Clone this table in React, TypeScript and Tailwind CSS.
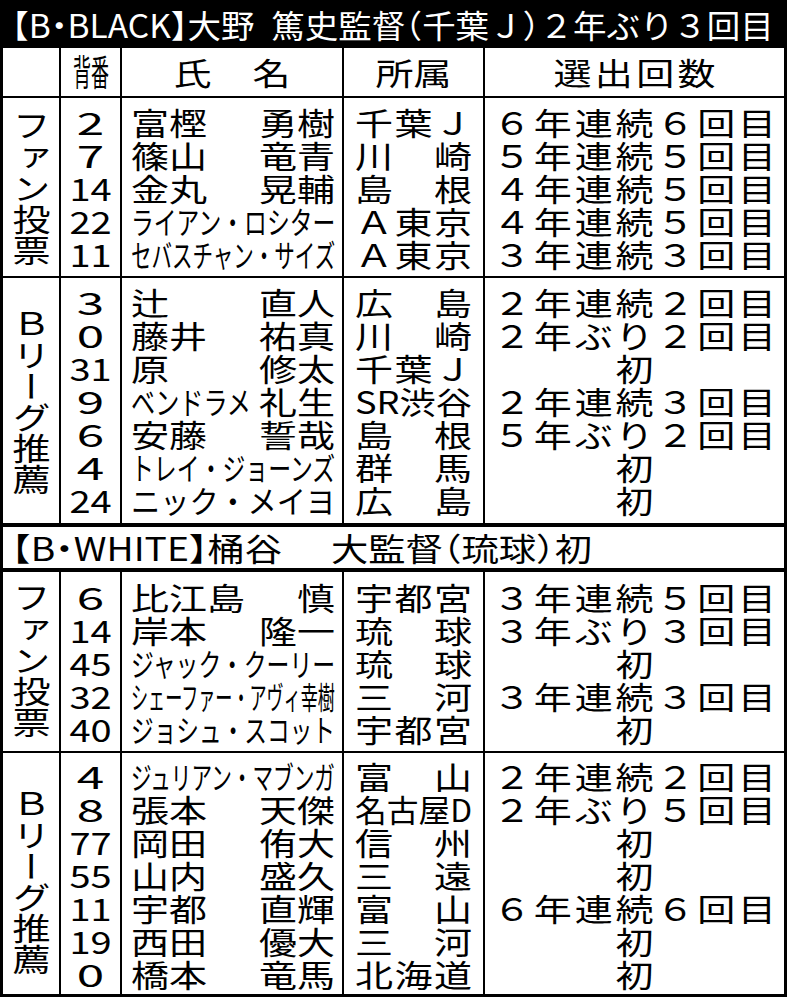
import React, { useLayoutEffect, useRef, useState } from 'react';

type Row = {
  no: string;
  name: string[]; // [surname, given] or [full kana name]
  fitSur?: boolean; // surname part squeezed, given name normal
  team: string;
  count: string;
};

const blackFan: Row[] = [
  { no: '2', name: ['富樫', '勇樹'], team: '千葉Ｊ', count: '６年連続６回目' },
  { no: '7', name: ['篠山', '竜青'], team: '川崎', count: '５年連続５回目' },
  { no: '14', name: ['金丸', '晃輔'], team: '島根', count: '４年連続５回目' },
  { no: '22', name: ['ライアン・ロシター'], team: 'Ａ東京', count: '４年連続５回目' },
  { no: '11', name: ['セバスチャン・サイズ'], team: 'Ａ東京', count: '３年連続３回目' },
];

const blackLeague: Row[] = [
  { no: '3', name: ['辻', '直人'], team: '広島', count: '２年連続２回目' },
  { no: '0', name: ['藤井', '祐真'], team: '川崎', count: '２年ぶり２回目' },
  { no: '31', name: ['原', '修太'], team: '千葉Ｊ', count: '初' },
  { no: '9', name: ['ベンドラメ', '礼生'], fitSur: true, team: 'SR渋谷', count: '２年連続３回目' },
  { no: '6', name: ['安藤', '誓哉'], team: '島根', count: '５年ぶり２回目' },
  { no: '4', name: ['トレイ・ジョーンズ'], team: '群馬', count: '初' },
  { no: '24', name: ['ニック・メイヨ'], team: '広島', count: '初' },
];

const whiteFan: Row[] = [
  { no: '6', name: ['比江島', '慎'], team: '宇都宮', count: '３年連続５回目' },
  { no: '14', name: ['岸本', '隆一'], team: '琉球', count: '３年ぶり３回目' },
  { no: '45', name: ['ジャック・クーリー'], team: '琉球', count: '初' },
  { no: '32', name: ['シェーファー・アヴィ幸樹'], team: '三河', count: '３年連続３回目' },
  { no: '40', name: ['ジョシュ・スコット'], team: '宇都宮', count: '初' },
];

const whiteLeague: Row[] = [
  { no: '4', name: ['ジュリアン・マブンガ'], team: '富山', count: '２年連続２回目' },
  { no: '8', name: ['張本', '天傑'], team: '名古屋D', count: '２年ぶり５回目' },
  { no: '77', name: ['岡田', '侑大'], team: '信州', count: '初' },
  { no: '55', name: ['山内', '盛久'], team: '三遠', count: '初' },
  { no: '11', name: ['宇都', '直輝'], team: '富山', count: '６年連続６回目' },
  { no: '19', name: ['西田', '優大'], team: '三河', count: '初' },
  { no: '0', name: ['橋本', '竜馬'], team: '北海道', count: '初' },
];

// squeezes/stretches one line of text horizontally to the width of its box
function Fit({ className = '', children }: { className?: string; children: React.ReactNode }) {
  const box = useRef<HTMLDivElement>(null);
  const txt = useRef<HTMLSpanElement>(null);
  const [sx, setSx] = useState(1);

  useLayoutEffect(() => {
    const measure = () => {
      if (!box.current || !txt.current) return;
      const w = txt.current.offsetWidth;
      if (w) setSx(box.current.clientWidth / w);
    };
    measure();
    document.fonts?.ready.then(measure);
  }, []);

  return (
    <div ref={box} className={`min-w-0 whitespace-nowrap ${className}`}>
      <span ref={txt} className="inline-block origin-left" style={{ transform: `scaleX(${sx})` }}>
        {children}
      </span>
    </div>
  );
}

const rowCls = 'h-[33px] leading-[33px] scale-y-[0.82]';

const NameCell = ({ row }: { row: Row }) => {
  if (row.name.length === 1) return <Fit className={rowCls}>{row.name[0]}</Fit>;
  if (row.fitSur)
    return (
      <div className={`flex ${rowCls}`}>
        <Fit className="w-[120px] mr-[8px]">{row.name[0]}</Fit>
        <span className="ml-auto">{row.name[1]}</span>
      </div>
    );
  return (
    <div className={`flex justify-between ${rowCls}`}>
      <span>{row.name[0]}</span>
      <span>{row.name[1]}</span>
    </div>
  );
};

const TeamCell = ({ team }: { team: string }) => {
  const chars = [...team];
  if (chars.length > 3) return <Fit className={rowCls}>{team}</Fit>;
  return (
    <div className={`flex justify-between ${rowCls}`}>
      {chars.map((c, i) => (
        <span key={i}>{c}</span>
      ))}
    </div>
  );
};

const CountCell = ({ count }: { count: string }) => {
  if (count === '初')
    return <div className={`w-[286px] flex justify-center ${rowCls}`}>初</div>;
  return (
    <div className={`w-[286px] grid grid-cols-7 ${rowCls}`}>
      {[...count].map((c, i) => (
        <span key={i} className="text-center">
          {c}
        </span>
      ))}
    </div>
  );
};

const NoCell = ({ no }: { no: string }) => (
  <div className={`text-center ${rowCls} ${no.length === 1 ? 'scale-x-[1.3]' : ''}`}>{no}</div>
);

interface SectionProps {
  label: string;
  rows: Row[];
  box: string; // height + bottom border
  pad: string; // top padding of the rows
  labelPad: string;
}

const Section = ({ label, rows, box, pad, labelPad }: SectionProps) => (
  <div className={`flex border-black text-[38px] ${box}`}>
    <div className={`w-[58px] border-r-2 border-black flex justify-center ${labelPad}`}>
      <span className="inline-block [writing-mode:vertical-rl] [text-orientation:upright] leading-none origin-top scale-y-[0.82] whitespace-nowrap">
        {label}
      </span>
    </div>
    <div className={`w-[61px] border-r-2 border-black ${pad}`}>
      {rows.map((r, i) => (
        <NoCell key={i} no={r.no} />
      ))}
    </div>
    <div className={`w-[222px] border-r-2 border-black pl-[9px] pr-[7px] ${pad}`}>
      {rows.map((r, i) => (
        <NameCell key={i} row={r} />
      ))}
    </div>
    <div className={`w-[141px] border-r-2 border-black px-[11px] ${pad}`}>
      {rows.map((r, i) => (
        <TeamCell key={i} team={r.team} />
      ))}
    </div>
    <div className={`flex-1 flex flex-col items-center ${pad}`}>
      {rows.map((r, i) => (
        <CountCell key={i} count={r.count} />
      ))}
    </div>
  </div>
);

const Half = ({ children }: { children: React.ReactNode }) => (
  <span className="[font-feature-settings:'halt']">{children}</span>
);

export default function App() {
  return (
    <div className="w-[787px] h-[1000px] bg-white text-black font-['Noto_Sans_CJK_JP','Noto_Sans',sans-serif]">
      <div className="border-x-[3px] border-black">
        {/* title bar */}
        <div className="h-[48px] bg-black text-white text-[32px] pl-[9px] flex items-center">
          <Fit className="w-[762px] leading-[48px]">
            <Half>【</Half>B<Half>・</Half>BLACK<Half>】</Half>大野
            <span className="inline-block w-[16px]" />
            篤史監督<Half>（</Half>千葉Ｊ<Half>）</Half>２年ぶり３回目
          </Fit>
        </div>

        {/* column heads */}
        <div className="flex h-[50px] border-b-2 border-black text-[38px]">
          <div className="w-[58px] border-r-2 border-black" />
          <div className="w-[61px] border-r-2 border-black flex items-center justify-center">
            <Fit className="w-[36px] text-[36px] leading-[40px] -mt-[4px]">背番</Fit>
          </div>
          <div className="w-[222px] border-r-2 border-black flex items-center justify-center">
            <div className="w-[117px] flex justify-between leading-[40px] scale-y-[0.82]">
              <span>氏</span>
              <span>名</span>
            </div>
          </div>
          <div className="w-[141px] border-r-2 border-black flex items-center justify-center">
            <span className="leading-[40px] scale-y-[0.82]">所属</span>
          </div>
          <div className="flex-1 flex items-center justify-center">
            <div className="w-[162px] flex justify-between leading-[40px] scale-y-[0.82]">
              {[...'選出回数'].map((c) => (
                <span key={c}>{c}</span>
              ))}
            </div>
          </div>
        </div>

        <Section label="ファン投票" rows={blackFan} box="h-[180px] border-b-2" pad="pt-[7px]" labelPad="pt-[12px]" />
        <Section label="Ｂリーグ推薦" rows={blackLeague} box="h-[249px] border-b-4" pad="pt-[7px]" labelPad="pt-[30px]" />

        {/* second team title */}
        <div className="h-[45px] border-b-4 border-black text-[32px] pl-[9px] flex items-center">
          <Fit className="w-[580px] leading-[41px]">
            <Half>【</Half>B<Half>・</Half>WHITE<Half>】</Half>桶谷
            <span className="inline-block w-[42px]" />
            大監督<Half>（</Half>琉球<Half>）</Half>初
          </Fit>
        </div>

        <Section label="ファン投票" rows={whiteFan} box="h-[181px] border-b-2" pad="pt-[8px]" labelPad="pt-[10px]" />
        <Section label="Ｂリーグ推薦" rows={whiteLeague} box="h-[244px] border-b-[3px]" pad="pt-[6px]" labelPad="pt-[35px]" />
      </div>
    </div>
  );
}
